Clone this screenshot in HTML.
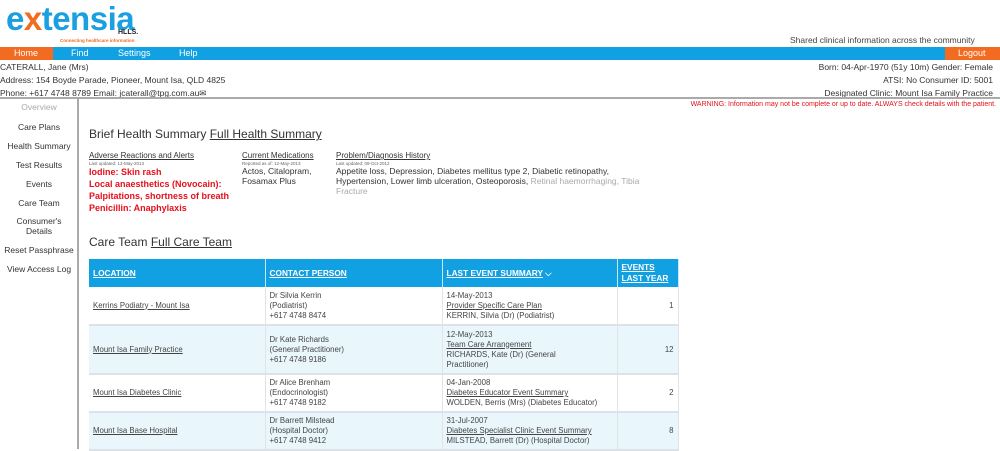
<!DOCTYPE html>
<html><head><style>
*{margin:0;padding:0;box-sizing:border-box}
body{width:1000px;height:449px;overflow:hidden;background:#fff;font-family:"Liberation Sans",sans-serif;color:#333;font-size:8.5px;position:relative}
.a{position:absolute;white-space:nowrap}
u{text-decoration:underline}
.nav{position:absolute;left:0;top:47px;width:1000px;height:13px;background:#11a0e2}
.nav span{position:absolute;top:1px;color:#fff;font-size:9px}
.side div{position:absolute;width:78px;text-align:center;font-size:8.5px;color:#333}
table{position:absolute;left:89px;top:259px;border-collapse:collapse;font-size:7.8px;color:#444}
th{background:#11a0e2;color:#fff;text-align:left;font-weight:bold;padding:0 4px;height:28px;border-right:1px solid #c8e7f5;font-size:8.3px}
th u{color:#fff}
td{padding:0 4px;vertical-align:middle;border-right:1px solid #e3e3e3;border-bottom:2px solid #dbe3e8;line-height:10px}
tr.b td{background:#e9f7fd}
.red{color:#e4101c;font-weight:bold;font-size:9px;line-height:12px}
</style></head><body>
<div class="a" style="left:6px;top:0px;font-size:33px;font-weight:bold;color:#1a9fe0;letter-spacing:-0.5px">e<span style="color:#f26b21">x</span>tensia</div>
<div class="a" style="left:118px;top:29px;font-size:7px;font-weight:bold;color:#222">HLLS.</div>
<div class="a" style="left:60px;top:38px;font-size:4.5px;color:#f26b21;font-weight:bold">Connecting healthcare information</div>
<div class="a" style="left:790px;top:35px;font-size:8.5px;color:#444">Shared clinical information across the community</div>
<div class="nav"><div style="position:absolute;left:0;top:0;width:53px;height:13px;background:#f26b21"></div>
<span style="left:14px">Home</span><span style="left:71px">Find</span><span style="left:118px">Settings</span><span style="left:179px">Help</span>
<div style="position:absolute;left:945px;top:0;width:55px;height:13px;background:#f26b21"></div><span style="left:958px">Logout</span></div>
<div class="a" style="left:0;top:62px">CATERALL, Jane (Mrs)</div>
<div class="a" style="left:0;top:75px">Address: 154 Boyde Parade, Pioneer, Mount Isa, QLD 4825</div>
<div class="a" style="left:0;top:88px">Phone: +617 4748 8789 Email: jcaterall@tpg.com.au✉</div>
<div class="a" style="right:7px;top:62px">Born: 04-Apr-1970 (51y 10m) Gender: Female</div>
<div class="a" style="right:7px;top:75px">ATSI: No Consumer ID: 5001</div>
<div class="a" style="right:7px;top:88px">Designated Clinic: <u>Mount Isa Family Practice</u></div>
<div style="position:absolute;left:0;top:97px;width:1000px;height:2px;background:#aaa"></div>
<div style="position:absolute;left:77px;top:99px;width:2px;height:350px;background:#aaa"></div>
<div class="a" style="right:4px;top:101px;font-size:7px;color:#e4101c">WARNING: Information may not be complete or up to date. ALWAYS check details with the patient.</div>
<div class="side">
<div style="top:102px;color:#aaa">Overview</div>
<div style="top:122px">Care Plans</div>
<div style="top:141px">Health Summary</div>
<div style="top:160px">Test Results</div>
<div style="top:179px">Events</div>
<div style="top:198px">Care Team</div>
<div style="top:216px;line-height:10px">Consumer's<br>Details</div>
<div style="top:245px">Reset Passphrase</div>
<div style="top:264px">View Access Log</div>
</div>
<div class="a" style="left:89px;top:127px;font-size:12px;color:#333">Brief Health Summary <u>Full Health Summary</u></div>
<div class="a" style="left:89px;top:151px;font-size:8px"><u>Adverse Reactions and Alerts</u></div>
<div class="a" style="left:89px;top:161px;font-size:4.5px;color:#666">Last updated: 12-May-2013</div>
<div class="a red" style="left:89px;top:166px">Iodine: Skin rash<br>Local anaesthetics (Novocain):<br>Palpitations, shortness of breath<br>Penicillin: Anaphylaxis</div>
<div class="a" style="left:242px;top:151px;font-size:8px"><u>Current Medications</u></div>
<div class="a" style="left:242px;top:161px;font-size:4.5px;color:#666">Reported as of: 12-May-2013</div>
<div class="a" style="left:242px;top:166px;font-size:8.5px;line-height:10px">Actos, Citalopram,<br>Fosamax Plus</div>
<div class="a" style="left:336px;top:151px;font-size:8px"><u>Problem/Diagnosis History</u></div>
<div class="a" style="left:336px;top:161px;font-size:4.5px;color:#666">Last updated: 09-Oct-2012</div>
<div class="a" style="left:336px;top:166px;font-size:8.5px;line-height:10px">Appetite loss, Depression, Diabetes mellitus type 2, Diabetic retinopathy,<br>Hypertension, Lower limb ulceration, Osteoporosis, <span style="color:#aaa">Retinal haemorrhaging, Tibia<br>Fracture</span></div>
<div class="a" style="left:89px;top:235px;font-size:12px">Care Team <u>Full Care Team</u></div>
<table>
<tr><th style="width:176px"><u>LOCATION</u></th><th style="width:177px"><u>CONTACT PERSON</u></th><th style="width:175px"><u>LAST EVENT SUMMARY</u> ⌵</th><th style="width:61px;line-height:11px"><u>EVENTS<br>LAST YEAR</u></th></tr>
<tr style="height:38px"><td><u>Kerrins Podiatry - Mount Isa</u></td><td>Dr Silvia Kerrin<br>(Podiatrist)<br>+617 4748 8474</td><td>14-May-2013<br><u>Provider Specific Care Plan</u><br>KERRIN, Silvia (Dr) (Podiatrist)</td><td style="text-align:right">1</td></tr>
<tr class="b" style="height:49px"><td><u>Mount Isa Family Practice</u></td><td>Dr Kate Richards<br>(General Practitioner)<br>+617 4748 9186</td><td>12-May-2013<br><u>Team Care Arrangement</u><br>RICHARDS, Kate (Dr) (General<br>Practitioner)</td><td style="text-align:right">12</td></tr>
<tr style="height:38px"><td><u>Mount Isa Diabetes Clinic</u></td><td>Dr Alice Brenham<br>(Endocrinologist)<br>+617 4748 9182</td><td>04-Jan-2008<br><u>Diabetes Educator Event Summary</u><br>WOLDEN, Berris (Mrs) (Diabetes Educator)</td><td style="text-align:right">2</td></tr>
<tr class="b" style="height:38px"><td><u>Mount Isa Base Hospital</u></td><td>Dr Barrett Milstead<br>(Hospital Doctor)<br>+617 4748 9412</td><td>31-Jul-2007<br><u>Diabetes Specialist Clinic Event Summary</u><br>MILSTEAD, Barrett (Dr) (Hospital Doctor)</td><td style="text-align:right">8</td></tr>
</table>
</body></html>
